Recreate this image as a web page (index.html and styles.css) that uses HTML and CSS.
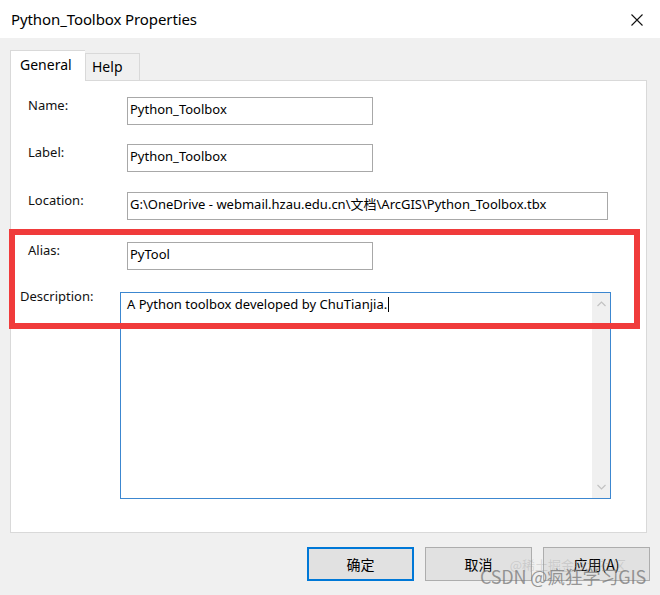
FILE: index.html
```html
<!DOCTYPE html>
<html>
<head>
<meta charset="utf-8">
<link rel="stylesheet" href="styles.css">
</head>
<body>
<div class="window">
  <div class="titlebar">
    <span class="title">Python_Toolbox Properties</span>
    <span class="close"><svg width="12" height="12" viewBox="0 0 12 12"><path d="M0.5 0.5 L11.5 11.5 M11.5 0.5 L0.5 11.5" stroke="#111" stroke-width="1.1" fill="none"/></svg></span>
  </div>
  <div class="body">
    <div class="tabs">
      <div class="tab tab-active">General</div>
      <div class="tab">Help</div>
    </div>
    <div class="panel">
      <div class="row row-name">
        <span class="lbl">Name:</span>
        <div class="input input-short">Python_Toolbox</div>
      </div>
      <div class="row row-label">
        <span class="lbl">Label:</span>
        <div class="input input-short">Python_Toolbox</div>
      </div>
      <div class="row row-location">
        <span class="lbl">Location:</span>
        <div class="input input-long">G:\OneDrive - webmail.hzau.edu.cn\文档\ArcGIS\Python_Toolbox.tbx</div>
      </div>
      <div class="row row-alias">
        <span class="lbl">Alias:</span>
        <div class="input input-short">PyTool</div>
      </div>
      <div class="row row-desc">
        <span class="lbl lbl-desc">Description:</span>
        <div class="textarea">
          <div class="ta-text">A Python toolbox developed by ChuTianjia.<span class="caret"></span></div>
          <div class="scrollbar">
            <svg width="9" height="6" viewBox="0 0 9 6"><path d="M0.5 5 L4.5 1 L8.5 5" stroke="#c2c2c2" stroke-width="1.2" fill="none"/></svg>
            <svg width="9" height="6" viewBox="0 0 9 6"><path d="M0.5 1 L4.5 5 L8.5 1" stroke="#c2c2c2" stroke-width="1.2" fill="none"/></svg>
          </div>
        </div>
      </div>
      <div class="highlight"></div>
    </div>
    <div class="buttons">
      <div class="btn btn-default">确定</div>
      <div class="btn">取消</div>
      <div class="btn">应用(A)</div>
    </div>
  </div>
  <div class="watermark"><span class="wm-faint">@稀土掘金技术社区</span><span class="wm-main">CSDN @疯狂学习GIS</span></div>
</div>
</body>
</html>
```
FILE: styles.css
```css
html, body {
  margin: 0;
  padding: 0;
  background: #f0f0f0;
}
.window {
  width: 660px;
  height: 595px;
  position: relative;
  background: #f0f0f0;
  font-family: "Noto Sans", "Noto Sans CJK SC", sans-serif;
  color: #000;
  overflow: hidden;
}
.titlebar {
  height: 38px;
  background: #fff;
  display: flex;
  align-items: center;
  justify-content: space-between;
  padding: 0 17px 0 11px;
  box-sizing: border-box;
}
.title {
  font-size: 15px;
  letter-spacing: -0.1px;
  margin-top: -1px;
}
.close {
  display: flex;
  margin-top: 2px;
}
.body {
  padding: 12px 10px 0 10px;
}
.tabs {
  display: flex;
  align-items: flex-end;
  height: 30px;
}
.tab {
  font-size: 14px;
  box-sizing: border-box;
  border: 1px solid #d9d9d9;
  border-bottom: none;
  background: #f0f0f0;
  height: 27px;
  width: 55px;
  padding: 4px 0 0 6px;
  line-height: 18px;
}
.tab-active {
  position: relative;
  z-index: 2;
  background: #fff;
  height: 31px;
  width: 75px;
  margin-bottom: -1px;
  padding: 5px 0 0 9px;
  border-right: none;
}
.panel {
  position: relative;
  width: 637px;
  height: 453px;
  box-sizing: border-box;
  border: 1px solid #d9d9d9;
  background: #fff;
  padding: 16px 0 0 17px;
}
.row {
  display: flex;
  align-items: flex-start;
}
.row-label { margin-top: 19px; }
.row-location { margin-top: 20px; }
.row-alias { margin-top: 22px; }
.row-desc { margin-top: 22px; }
.lbl {
  width: 99px;
  font-size: 13px;
  line-height: 16px;
  color: #111;
  flex-shrink: 0;
}
.lbl-desc {
  margin-left: -8px;
  margin-top: -4px;
  width: 100px;
}
.input {
  height: 28px;
  box-sizing: border-box;
  border: 1px solid #a8a8a8;
  padding: 0 2px;
  font-size: 13px;
  line-height: 23px;
  white-space: nowrap;
  overflow: hidden;
}
.input-short { width: 246px; }
.input-long { width: 481px; }
.textarea {
  width: 491px;
  height: 207px;
  box-sizing: border-box;
  border: 1px solid #3c87d0;
  display: flex;
  justify-content: space-between;
}
.ta-text {
  font-size: 13px;
  line-height: 16px;
  padding: 3px 0 0 6px;
}
.caret {
  display: inline-block;
  width: 1px;
  height: 15px;
  background: #000;
  vertical-align: -3px;
  margin-left: 1px;
}
.scrollbar {
  width: 18px;
  background: #f0f0f0;
  display: flex;
  flex-direction: column;
  justify-content: space-between;
  align-items: center;
  padding: 8px 0 8px 0;
}
.highlight {
  position: absolute;
  left: -2px;
  top: 148px;
  width: 631px;
  height: 100px;
  box-sizing: border-box;
  border: 6px solid #f03b3b;
  pointer-events: none;
}
.buttons {
  display: flex;
  justify-content: flex-end;
  gap: 11px;
  margin-top: 14px;
}
.btn {
  width: 107px;
  height: 34px;
  box-sizing: border-box;
  border: 1px solid #adadad;
  background: #e1e1e1;
  font-family: "Noto Sans CJK SC", sans-serif;
  font-size: 14px;
  display: flex;
  align-items: center;
  justify-content: center;
}
.btn-default {
  border: 2px solid #0078d7;
}
.watermark {
  position: absolute;
  right: 14px;
  bottom: 8px;
  display: flex;
  flex-direction: column;
  align-items: flex-end;
  font-family: "Noto Sans CJK SC", sans-serif;
  pointer-events: none;
}
.wm-faint {
  font-size: 13px;
  color: rgba(150, 150, 150, 0.3);
  line-height: 14px;
  margin-right: 20px;
  margin-bottom: -6px;
}
.wm-main {
  font-size: 18px;
  line-height: 21px;
  color: rgba(120, 120, 120, 0.75);
  letter-spacing: -0.2px;
}
```
